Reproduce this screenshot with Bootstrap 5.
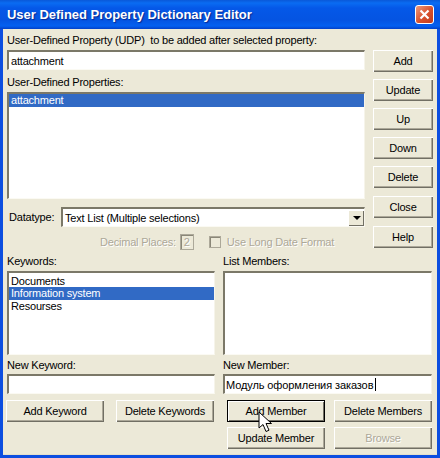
<!DOCTYPE html>
<html>
<head>
  <title>User Defined Property Dictionary Editor</title>
  <link href="https://cdn.jsdelivr.net/npm/bootstrap@5.3.7/dist/css/bootstrap.min.css" rel="stylesheet" />
  <style>
    html, body { margin: 0; height: 458px; overflow: hidden; background: #0a3fc4; }
    body { font-family: "Liberation Sans", Arial, sans-serif; font-size: 11px; letter-spacing: -.2px; line-height: 14px; color: #000; }
    .dlg-window { width: 440px; height: 458px; display: flex; flex-direction: column; background: #0c4ee0; border-radius: 7px 7px 0 0; }
    .dlg-title { height: 29px; flex: none; padding: 0 6px 0 7px; color: #fff; font-size: 13px; font-weight: 700; letter-spacing: -.02px;
      background: linear-gradient(#0a58d8 0, #0a6cf2 3px, #0558e8 8px, #0554e2 20px, #0460f0 26px, #0340c8 29px); text-shadow: 1px 1px 1px #0a2a90; }
    .dlg-close { width: 19px; height: 19px; border: 1px solid #fff; border-radius: 3px; background: linear-gradient(135deg, #ee9a7c, #d8502c 55%, #c23a1c); }
    .dlg-body { flex: 1; margin: 0 3px 3px 3px; padding: 0 5px 0 4px; background: #ece9d8; box-shadow: inset 0 -1px 0 #e4e0cc; }
    .lbl { display: block; white-space: pre; height: 14px; }
    .sunken { border: 1px solid; border-width: 2px 1px 1px 2px; border-color: #7b7868 #f6f4ea #fbfaf3 #7b7868; border-radius: 0; background: #fff; }
    input.form-control.sunken { height: 20px; min-height: 0; padding: 0 0 0 2px; font-size: 11px; letter-spacing: -.2px; line-height: 14px; color: #000; box-shadow: none; }
    input.form-control.sunken.member-input { padding-left: 1px; letter-spacing: -.1px; }
    .udp-input { width: 358px; }
    .list-group.sunken { display: block; overflow: hidden; }
    .list-group-item { border: 0; border-radius: 0 !important; padding: 0 2px; height: 13px; line-height: 13px; background: transparent; color: #000; font-size: 11px; }
    .list-group-item.active { background: #316ac5; color: #fff; border: 0; margin: 0; }
    .udp-list { width: 358px; height: 107px; }
    .kw-col { width: 208px; }
    .mem-col { width: 209px; }
    .kw-list { height: 84px; padding-top: 2px; }
    .kw-list .list-group-item { height: 13px; }
    .btn.xp-btn { width: 60px; height: 22px; padding: 0; border: 0; border-radius: 0; background: #ece9d8; color: #000; font-size: 11px; letter-spacing: -.2px; line-height: 22px;
      box-shadow: inset 1px 1px 0 #fff, inset -1px -1px 0 #716f64, inset -2px -2px 0 #aca899; }
    .btn.xp-wide { width: 98px; }
    .btn.xp-focus { box-shadow: inset 0 0 0 1px #000, inset 2px 2px 0 #fff, inset -2px -2px 0 #716f64; }
    .btn.xp-btn:disabled { opacity: 1; color: #aca899; text-shadow: 1px 1px 0 #fff; }
    .side-btns { gap: 7px; width: 60px; }
    .muted-txt { color: #aca899; text-shadow: 1px 1px 0 #fff; }
    .dt-label { width: 54px; padding-left: 2px; }
    .dt-select { width: 304px; height: 20px; }
    .dt-select span { padding-left: 2px; white-space: nowrap; }
    .dt-arrow { width: 16px; height: 16px; background: #ece9d8; box-shadow: inset 1px 1px 0 #fff, inset -1px -1px 0 #716f64; }
    .dt-arrow i { width: 0; height: 0; border: 4px solid transparent; border-top-color: #000; border-bottom: 0; }
    .dec-box { width: 14px; height: 16px; border: 1px solid #aca899; box-shadow: inset 1px 1px 0 #8a8778; padding-left: 3px; line-height: 15px; }
    .chk-box { width: 12px; height: 12px; border: 1px solid #aca899; box-shadow: inset 1px 1px 0 #8a8778; margin-right: 6px; }
    .dec-row { height: 16px; }
    .caret-line { position: absolute; left: 375px; top: 378px; width: 1px; height: 13px; background: #000; }
    .mouse-ptr { position: absolute; left: 258px; top: 411px; width: 15px; height: 22px; }
  </style>
</head>
<body>
  <div class="dlg-window">
    <div class="dlg-title d-flex align-items-center justify-content-between">
      <span>User Defined Property Dictionary Editor</span>
      <span class="dlg-close d-flex align-items-center justify-content-center">
        <svg width="11" height="11" viewBox="0 0 11 11"><path d="M1.5 1.500l8 8M9.500 1.500l-8 8" stroke="#fff" stroke-width="2.200" fill="none"/></svg>
      </span>
    </div>
    <div class="dlg-body">
      <div class="d-flex gap-2 justify-content-between">
        <div>
          <label class="lbl pt-1" style="height:21px">User-Defined Property (UDP)  to be added after selected property:</label>
          <input class="form-control sunken udp-input" value="attachment" />
          <label class="lbl" style="margin-top:5px;height:17px">User-Defined Properties:</label>
          <div class="list-group sunken udp-list">
            <div class="list-group-item active">attachment</div>
          </div>
          <div class="d-flex align-items-center" style="margin-top:8px">
            <span class="dt-label">Datatype:</span>
            <div class="sunken dt-select d-flex align-items-center justify-content-between">
              <span>Text List (Multiple selections)</span>
              <span class="dt-arrow d-flex align-items-center justify-content-center"><i></i></span>
            </div>
          </div>
          <div class="dec-row d-flex align-items-center" style="margin-top:7px;padding-left:93px">
            <span class="muted-txt">Decimal Places:</span>
            <span class="dec-box muted-txt" style="margin:0 15px 0 4px">2</span>
            <span class="chk-box"></span>
            <span class="muted-txt">Use Long Date Format</span>
          </div>
        </div>
        <div class="side-btns d-flex flex-column" style="padding-top:21px">
          <button class="btn xp-btn">Add</button>
          <button class="btn xp-btn">Update</button>
          <button class="btn xp-btn">Up</button>
          <button class="btn xp-btn">Down</button>
          <button class="btn xp-btn">Delete</button>
          <button class="btn xp-btn" style="margin-top:1px">Close</button>
          <button class="btn xp-btn" style="margin-top:1px">Help</button>
        </div>
      </div>
      <div class="d-flex justify-content-between" style="margin-top:4px">
        <div class="kw-col">
          <label class="lbl" style="height:17px">Keywords:</label>
          <div class="list-group sunken kw-list">
            <div class="list-group-item">Documents</div>
            <div class="list-group-item active">Information system</div>
            <div class="list-group-item">Resourses</div>
          </div>
          <label class="lbl" style="margin-top:3px;height:16px">New Keyword:</label>
          <input class="form-control sunken" />
          <div class="d-flex justify-content-between" style="margin:6px 1px 0 -1px">
            <button class="btn xp-btn xp-wide">Add Keyword</button>
            <button class="btn xp-btn xp-wide">Delete Keywords</button>
          </div>
        </div>
        <div class="mem-col">
          <label class="lbl" style="height:17px">List Members:</label>
          <div class="list-group sunken kw-list"></div>
          <label class="lbl" style="margin-top:3px;height:16px">New Member:</label>
          <input class="form-control sunken member-input" value="Модуль оформления заказов" />
          <div class="d-flex justify-content-between" style="margin-top:6px;padding-left:4px">
            <button class="btn xp-btn xp-wide xp-focus">Add Member</button>
            <button class="btn xp-btn xp-wide">Delete Members</button>
          </div>
          <div class="d-flex justify-content-between" style="margin-top:5px;padding-left:4px">
            <button class="btn xp-btn xp-wide">Update Member</button>
            <button class="btn xp-btn xp-wide" disabled>Browse</button>
          </div>
        </div>
      </div>
    </div>
  </div>
  <span class="caret-line"></span>
  <svg class="mouse-ptr" viewBox="0 0 15 22"><path d="M1 1v16l4-3.500 3 7 3-1.300-3-6.700h5.500z" fill="#fff" stroke="#000" stroke-width="1"/></svg>
</body>
</html>
